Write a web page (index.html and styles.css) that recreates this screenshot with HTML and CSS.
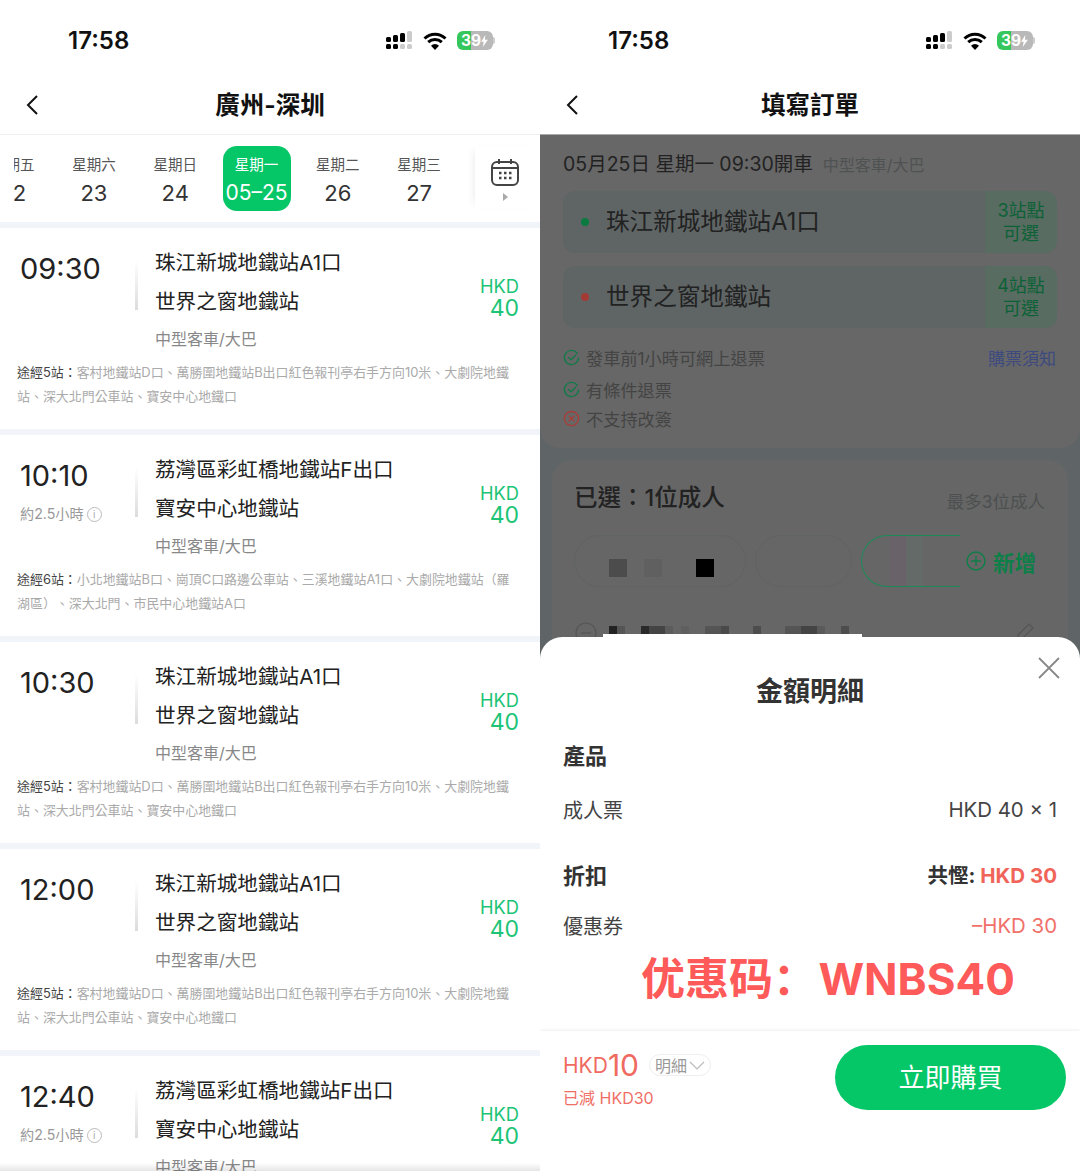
FILE: index.html
```html
<!DOCTYPE html>
<html lang="zh-Hant">
<head>
    <meta charset="UTF-8">
    <title>廣州-深圳</title>
    <link rel="stylesheet" href="styles.css">
</head>
<body>
    <div class="phone list-phone">
        <div class="status">
            <span class="clock">17:58</span>
            <svg class="signal" viewBox="0 0 27 19"><rect x="0" y="6" width="5" height="5" rx="1.5"/><rect x="0" y="13" width="5" height="5" rx="1.5"/><rect x="7" y="4" width="5" height="7" rx="1.5"/><rect x="7" y="13" width="5" height="5" rx="1.5"/><rect x="14" y="2" width="5" height="9" rx="1.5"/><rect x="14" y="13" width="5" height="5" rx="1.5" fill="#ccc"/><rect x="21" y="0" width="5" height="11" rx="1.5" fill="#ccc"/><rect x="21" y="13" width="5" height="5" rx="1.5" fill="#ccc"/></svg>
            <svg class="wifi" viewBox="0 0 24 18"><path d="M1.5 6.5a15 15 0 0 1 21 0M5.2 10.2a10 10 0 0 1 13.6 0" fill="none" stroke="#000" stroke-width="3"/><path d="M12 18l-4-4.2a5.6 5.6 0 0 1 8 0z"/></svg>
            <span class="battery">39<svg viewBox="0 0 8 14"><path d="M5 0L0 8h3l-1 6 6-8.500H4.500z" fill="#fff"/></svg></span>
        </div>
        <div class="nav">
            <svg class="back" viewBox="0 0 12 20"><path d="M11 1L2 10l9 9" fill="none" stroke="#111" stroke-width="2"/></svg>
            <h1>廣州-深圳</h1>
        </div>
        <div class="dates">
            <div class="day-list">
                <div class="day-track">
                    <div class="day"><span class="day-name">星期五</span><span class="day-num">22</span></div>
                    <div class="day"><span class="day-name">星期六</span><span class="day-num">23</span></div>
                    <div class="day"><span class="day-name">星期日</span><span class="day-num">24</span></div>
                    <div class="day active"><span class="day-name">星期一</span><span class="day-num">05–25</span></div>
                    <div class="day"><span class="day-name">星期二</span><span class="day-num">26</span></div>
                    <div class="day"><span class="day-name">星期三</span><span class="day-num">27</span></div>
                </div>
            </div>
            <div class="calendar">
                <svg viewBox="0 0 28 28" width="28" height="28"><rect x="1" y="4" width="26" height="23" rx="5" fill="none" stroke="#444" stroke-width="2"/><path d="M1 10h26M8 1v5M20 1v5" stroke="#444" stroke-width="2" fill="none"/><path d="M8 15h2.500M13 15h2.500M18 15h2.500M8 20h2.500M13 20h2.500M18 20h2.500" stroke="#444" stroke-width="2.500"/></svg>
                <span class="cal-arrow"></span>
            </div>
        </div>

        <div class="trip">
            <div class="trip-main">
                <div class="trip-time"><div class="time">09:30</div></div>
                <div class="trip-line"></div>
                <div class="trip-stops">
                    <div class="stop">珠江新城地鐵站A1口</div>
                    <div class="stop">世界之窗地鐵站</div>
                    <div class="bus">中型客車/大巴</div>
                </div>
                <div class="price"><div class="cur">HKD</div><div class="amount">40</div></div>
            </div>
            <p class="via"><b>途經5站：</b>客村地鐵站D口、萬勝圍地鐵站B出口紅色報刊亭右手方向10米、大劇院地鐵<br>站、深大北門公車站、寶安中心地鐵口</p>
        </div>

        <div class="trip">
            <div class="trip-main">
                <div class="trip-time"><div class="time">10:10</div><div class="dur">約2.5小時<i class="info">i</i></div></div>
                <div class="trip-line"></div>
                <div class="trip-stops">
                    <div class="stop">荔灣區彩虹橋地鐵站F出口</div>
                    <div class="stop">寶安中心地鐵站</div>
                    <div class="bus">中型客車/大巴</div>
                </div>
                <div class="price"><div class="cur">HKD</div><div class="amount">40</div></div>
            </div>
            <p class="via"><b>途經6站：</b>小北地鐵站B口、崗頂C口路邊公車站、三溪地鐵站A1口、大劇院地鐵站（羅<br>湖區）、深大北門、市民中心地鐵站A口</p>
        </div>

        <div class="trip">
            <div class="trip-main">
                <div class="trip-time"><div class="time">10:30</div></div>
                <div class="trip-line"></div>
                <div class="trip-stops">
                    <div class="stop">珠江新城地鐵站A1口</div>
                    <div class="stop">世界之窗地鐵站</div>
                    <div class="bus">中型客車/大巴</div>
                </div>
                <div class="price"><div class="cur">HKD</div><div class="amount">40</div></div>
            </div>
            <p class="via"><b>途經5站：</b>客村地鐵站D口、萬勝圍地鐵站B出口紅色報刊亭右手方向10米、大劇院地鐵<br>站、深大北門公車站、寶安中心地鐵口</p>
        </div>

        <div class="trip">
            <div class="trip-main">
                <div class="trip-time"><div class="time">12:00</div></div>
                <div class="trip-line"></div>
                <div class="trip-stops">
                    <div class="stop">珠江新城地鐵站A1口</div>
                    <div class="stop">世界之窗地鐵站</div>
                    <div class="bus">中型客車/大巴</div>
                </div>
                <div class="price"><div class="cur">HKD</div><div class="amount">40</div></div>
            </div>
            <p class="via"><b>途經5站：</b>客村地鐵站D口、萬勝圍地鐵站B出口紅色報刊亭右手方向10米、大劇院地鐵<br>站、深大北門公車站、寶安中心地鐵口</p>
        </div>

        <div class="trip">
            <div class="trip-main">
                <div class="trip-time"><div class="time">12:40</div><div class="dur">約2.5小時<i class="info">i</i></div></div>
                <div class="trip-line"></div>
                <div class="trip-stops">
                    <div class="stop">荔灣區彩虹橋地鐵站F出口</div>
                    <div class="stop">寶安中心地鐵站</div>
                    <div class="bus">中型客車/大巴</div>
                </div>
                <div class="price"><div class="cur">HKD</div><div class="amount">40</div></div>
            </div>
        </div>
    </div>

    <div class="phone order-phone">
        <div class="status">
            <span class="clock">17:58</span>
            <svg class="signal" viewBox="0 0 27 19"><rect x="0" y="6" width="5" height="5" rx="1.5"/><rect x="0" y="13" width="5" height="5" rx="1.5"/><rect x="7" y="4" width="5" height="7" rx="1.5"/><rect x="7" y="13" width="5" height="5" rx="1.5"/><rect x="14" y="2" width="5" height="9" rx="1.5"/><rect x="14" y="13" width="5" height="5" rx="1.5" fill="#ccc"/><rect x="21" y="0" width="5" height="11" rx="1.5" fill="#ccc"/><rect x="21" y="13" width="5" height="5" rx="1.5" fill="#ccc"/></svg>
            <svg class="wifi" viewBox="0 0 24 18"><path d="M1.5 6.5a15 15 0 0 1 21 0M5.2 10.2a10 10 0 0 1 13.6 0" fill="none" stroke="#000" stroke-width="3"/><path d="M12 18l-4-4.2a5.6 5.6 0 0 1 8 0z"/></svg>
            <span class="battery">39<svg viewBox="0 0 8 14"><path d="M5 0L0 8h3l-1 6 6-8.500H4.500z" fill="#fff"/></svg></span>
        </div>
        <div class="nav nav-order">
            <svg class="back" viewBox="0 0 12 20"><path d="M11 1L2 10l9 9" fill="none" stroke="#111" stroke-width="2"/></svg>
            <h1>填寫訂單</h1>
        </div>

        <div class="dimmed">
            <div class="ride-card">
                <div class="ride-head">05月25日 星期一 09:30開車<span>中型客車/大巴</span></div>
                <div class="pick">
                    <span class="dot dot-green"></span>
                    <span class="pick-name">珠江新城地鐵站A1口</span>
                    <span class="pick-tag">3站點<br>可選</span>
                </div>
                <div class="pick">
                    <span class="dot dot-red"></span>
                    <span class="pick-name">世界之窗地鐵站</span>
                    <span class="pick-tag">4站點<br>可選</span>
                </div>
                <div class="rule">
                    <svg viewBox="0 0 18 18"><path d="M15.500 5.200A7.500 7.500 0 1 0 16.500 9" fill="none" stroke="#157a4a" stroke-width="1.500"/><path d="M5.500 8.500l3 3 5.500-5.500" fill="none" stroke="#157a4a" stroke-width="1.500"/></svg>
                    發車前1小時可網上退票<a>購票須知</a>
                </div>
                <div class="rule rule-mid">
                    <svg viewBox="0 0 18 18"><path d="M15.500 5.200A7.500 7.500 0 1 0 16.500 9" fill="none" stroke="#157a4a" stroke-width="1.500"/><path d="M5.500 8.500l3 3 5.500-5.500" fill="none" stroke="#157a4a" stroke-width="1.500"/></svg>
                    有條件退票
                </div>
                <div class="rule">
                    <svg viewBox="0 0 18 18"><circle cx="9" cy="9" r="7.500" fill="none" stroke="#a63f3a" stroke-width="1.500"/><path d="M6 6l6 6M12 6l-6 6" stroke="#a63f3a" stroke-width="1.500"/></svg>
                    不支持改簽
                </div>
            </div>
            <div class="people-card">
                <div class="people-head"><span class="picked">已選：1位成人</span><span class="limit">最多3位成人</span></div>
                <div class="chips">
                    <div class="chip chip-one"><i class="sq sq1"></i><i class="sq sq2"></i><i class="sq sq3"></i></div>
                    <div class="chip chip-two"></div>
                    <div class="chip chip-three"></div>
                    <div class="add">
                        <svg viewBox="0 0 20 20" width="20" height="20"><circle cx="10" cy="10" r="9" fill="none" stroke="#0e7f48" stroke-width="1.400"/><path d="M10 5v10M5 10h10" stroke="#0e7f48" stroke-width="1.400"/></svg>
                        新增
                    </div>
                </div>
                <div class="person">
                    <svg class="minus" viewBox="0 0 22 22"><circle cx="11" cy="11" r="10" fill="none" stroke="#555" stroke-width="1.200"/><path d="M6 11h10" stroke="#555" stroke-width="1.200"/></svg>
                    <div class="mosaic"></div>
                    <svg class="pencil" viewBox="0 0 20 20"><path d="M3 13L14 2l4 4L7 17l-5 1z" fill="none" stroke="#555" stroke-width="1.200"/></svg>
                </div>
            </div>
        </div>

        <div class="sheet">
            <svg class="close" viewBox="0 0 22 22"><path d="M1 1l20 20M21 1L1 21" stroke="#888" stroke-width="1.800"/></svg>
            <h2>金額明細</h2>
            <div class="sheet-row sec-product"><strong>產品</strong></div>
            <div class="sheet-row sec-adult"><span>成人票</span><span class="fare">HKD 40 × 1</span></div>
            <div class="sheet-row sec-discount"><strong>折扣</strong><strong class="saved">共慳: <em>HKD 30</em></strong></div>
            <div class="sheet-row sec-coupon"><span>優惠券</span><span class="minus-fare">–HKD 30</span></div>
            <div class="promo" lang="zh-Hans">优惠码： WNBS40</div>
            <div class="pay-bar">
                <div class="pay-left">
                    <div class="total">HKD<b>10</b><span class="detail">明細<svg viewBox="0 0 16 9" width="16" height="9"><path d="M1 1l7 7 7-7" fill="none" stroke="#bbb" stroke-width="1.200"/></svg></span></div>
                    <div class="reduced">已減 HKD30</div>
                </div>
                <button class="buy">立即購買</button>
            </div>
        </div>
    </div>
</body>
</html>
```

FILE: styles.css
```css
* {
    box-sizing: border-box;
}

body {
    margin: 0;
    display: flex;
    width: 1080px;
    height: 1171px;
    overflow: hidden;
    background-color: #fff;
    font-family: Inter, "Noto Sans CJK TC", sans-serif;
    color: #222;
}

.phone {
    position: relative;
    width: 540px;
    height: 1171px;
    overflow: hidden;
    background-color: #fff;
}

.list-phone::after {
    content: "";
    position: absolute;
    left: 0;
    right: 0;
    bottom: 0;
    height: 8px;
    background: linear-gradient(to bottom, rgba(0,0,0,0), rgba(0,0,0,0.1));
}

.order-phone {
    display: flex;
    flex-direction: column;
}

/* status bar */
.status {
    display: flex;
    align-items: center;
    height: 75px;
    padding: 6px 45px 0 68px;
    flex-shrink: 0;
}

.clock {
    font-size: 24px;
    font-weight: 600;
    color: #111;
    margin-right: auto;
}

.signal {
    width: 27px;
    height: 19px;
}

.wifi {
    width: 24px;
    height: 18px;
    margin: 0 10px 0 10px;
}

.battery {
    position: relative;
    display: flex;
    align-items: center;
    width: 36px;
    height: 19px;
    padding-left: 4px;
    border-radius: 6px;
    background: linear-gradient(to right, #35c65c 40%, #b9b9b9 40%);
    color: #fff;
    font-size: 15.500px;
    font-weight: 700;
    margin-right: 2px;
}

.battery::after {
    content: "";
    position: absolute;
    right: -2px;
    top: 6px;
    width: 2px;
    height: 7px;
    border-radius: 0 2px 2px 0;
    background-color: #ccc;
}

.battery svg {
    width: 7px;
    height: 12px;
}

/* nav */
.nav {
    display: flex;
    align-items: center;
    justify-content: center;
    position: relative;
    height: 60px;
    border-bottom: 1px solid #eee;
    flex-shrink: 0;
}

.nav-order {
    border-bottom-color: #aaa;
}

.nav h1 {
    margin: 0 0 3px;
    font-size: 24.500px;
    font-weight: 700;
    color: #111;
}

.back {
    position: absolute;
    left: 26px;
    top: 20px;
    width: 12px;
    height: 20px;
}

/* date strip */
.dates {
    display: flex;
    height: 87px;
    padding-top: 11px;
}

.day-list {
    flex: 1;
    margin-left: 14px;
    overflow: hidden;
}

.day-track {
    display: flex;
    margin-left: -42px;
}

.day {
    display: flex;
    flex-direction: column;
    align-items: center;
    flex: 0 0 81.300px;
    height: 65px;
    padding-top: 9px;
}

.day-name {
    font-size: 14.500px;
    line-height: 20px;
    color: #555;
}

.day-num {
    margin-top: 2px;
    font-size: 22px;
    line-height: 32px;
    color: #333;
}

.day.active {
    flex: 0 0 68px;
    margin: 0 6.650px;
    border-radius: 14px;
    background-color: #06c768;
}

.day.active .day-name,
.day.active .day-num {
    color: #fff;
    white-space: nowrap;
}

.day.active .day-num {
    font-size: 21px;
}

.calendar {
    display: flex;
    flex-direction: column;
    align-items: center;
    width: 65px;
    height: 62px;
    padding: 12px 5px 0 0;
    box-shadow: -6px 0 8px -5px rgba(0,0,0,0.08);
}

.cal-arrow {
    margin-top: 7px;
    border-left: 5px solid #aaa;
    border-top: 4px solid transparent;
    border-bottom: 4px solid transparent;
}

/* trips */
.trip {
    height: 207px;
    border-top: 6px solid #f1f4f9;
    padding: 15px 21px 0 20px;
}

.trip-main {
    display: flex;
}

.trip-time {
    width: 115px;
    padding-top: 6px;
}

.time {
    font-size: 29px;
    line-height: 40px;
    color: #222;
}

.dur {
    display: flex;
    align-items: center;
    margin-top: 8px;
    font-size: 14.200px;
    line-height: 20px;
    color: #999;
}

.info {
    width: 15px;
    height: 15px;
    margin-left: 3px;
    border: 1px solid #bbb;
    border-radius: 50%;
    font-size: 10px;
    line-height: 13px;
    font-style: normal;
    text-align: center;
    color: #aaa;
}

.trip-line {
    width: 3px;
    height: 50px;
    margin: 17px 18px 0 0;
    background: linear-gradient(to bottom, #fff, #dcdcdc);
}

.trip-stops {
    flex: 1;
    margin-left: -1px;
}

.stop {
    font-size: 20.600px;
    line-height: 39px;
    color: #222;
}

.bus {
    font-size: 16px;
    line-height: 37px;
    color: #888;
}

.price {
    padding-top: 33px;
    text-align: right;
    color: #1cc476;
}

.cur {
    font-size: 18.300px;
    line-height: 21px;
}

.amount {
    font-size: 23px;
    line-height: 22px;
}

.via {
    margin: 2px 0 0 -3px;
    font-size: 12.950px;
    line-height: 24px;
    color: #aaa;
    white-space: nowrap;
    text-spacing-trim: space-all;
}

.via b {
    font-weight: 400;
    color: #444;
}

/* dimmed order page */
.dimmed {
    flex: 1;
    min-height: 0;
    overflow: hidden;
    background-color: #5f6566;
}

.ride-card {
    height: 313px;
    padding: 15px 23px 0;
    border-radius: 0 0 20px 20px;
    background-color: #676767;
}

.ride-head {
    font-size: 19.500px;
    line-height: 28px;
    color: #222;
    white-space: nowrap;
}

.ride-head span {
    margin-left: 10px;
    font-size: 16px;
    color: #4f5252;
}

.pick {
    display: flex;
    align-items: center;
    height: 62px;
    margin-top: 12px;
    overflow: hidden;
    border-radius: 12px;
    background-color: #5f6565;
}

.pick + .pick {
    margin-top: 13px;
}

.dot {
    width: 8px;
    height: 8px;
    margin: 0 17px 0 18px;
    border-radius: 50%;
}

.dot-green {
    background-color: #0a7a40;
}

.dot-red {
    background-color: #a33a36;
}

.pick-name {
    flex: 1;
    padding-bottom: 4px;
    font-size: 23.600px;
    color: #222;
}

.pick-tag {
    display: flex;
    align-items: center;
    justify-content: center;
    align-self: stretch;
    width: 72px;
    background-color: #586c62;
    color: #0c6236;
    font-size: 18px;
    line-height: 23px;
    text-align: center;
}

.rule {
    display: flex;
    align-items: center;
    height: 30.500px;
    font-size: 17.200px;
    color: #444;
}

.pick + .rule {
    margin-top: 14px;
}

.rule-mid {
    padding-top: 3px;
}

.rule svg {
    width: 17px;
    height: 17px;
    margin-right: 6px;
}

.rule a {
    margin-left: auto;
    margin-right: 1px;
    font-size: 17px;
    color: #3d4a80;
}

.people-card {
    height: 300px;
    margin: 12px 12px 0;
    padding-top: 22px;
    border-radius: 20px 20px 0 0;
    background-color: #666;
}

.people-head {
    display: flex;
    align-items: center;
    justify-content: space-between;
    height: 32px;
    padding: 0 23px;
    line-height: 32px;
}

.picked {
    font-size: 23.500px;
    font-weight: 500;
    color: #222;
    margin-left: -1px;
}

.limit {
    margin-top: 7px;
    font-size: 17.500px;
    color: #4d5050;
}

.chips {
    display: flex;
    gap: 9px;
    height: 52px;
    margin-top: 21px;
    padding-left: 22px;
}

.chip {
    border: 1px solid #606363;
    border-radius: 26px;
}

.chip-one {
    display: flex;
    align-items: flex-end;
    width: 172px;
    padding: 0 0 9px 34px;
}

.sq {
    width: 18px;
    height: 18px;
}

.sq1 {
    background-color: #4c4c4c;
}

.sq2 {
    margin-left: 17px;
    background-color: #606060;
}

.sq3 {
    margin-left: 34px;
    background-color: #000;
}

.chip-two {
    width: 97px;
}

.chip-three {
    width: 99px;
    border: 1px solid #1c8a58;
    border-right: 0;
    border-radius: 26px 0 0 26px;
    background: linear-gradient(to right, #666 28%, #696268 28%, #696268 45%, #646a68 45%, #646a68 62%, #666 62%);
}

.add {
    display: flex;
    align-items: center;
    gap: 7px;
    margin-left: -3px;
    padding-bottom: 0;
    font-size: 21.500px;
    font-weight: 700;
    color: #0e7f48;
}

.person {
    display: flex;
    align-items: flex-start;
    margin-top: 35px;
    padding: 0 33px 0 23px;
}

.minus {
    width: 22px;
    height: 22px;
}

.mosaic {
    width: 259px;
    height: 11px;
    margin: 4px 0 0 6px;
    border-bottom: 3px solid #fff;
    background-color: #666;
    background-image: linear-gradient(to right,
        #222 0 8px, #555 8px 16px, #666 16px 32px, #2a2a2a 32px 40px, #444 40px 56px, #5c5c5c 56px 64px,
        #666 64px 72px, #5f5f5f 72px 80px, #666 80px 96px, #555 96px 112px, #4a4a4a 112px 120px,
        #666 120px 144px, #4d4d4d 144px 152px, #666 152px 176px, #555 176px 192px, #444 192px 208px,
        #5a5a5a 208px 216px, #666 216px 232px, #4d4d4d 232px 240px, #666 240px);
    background-position: 6px 0;
    background-repeat: no-repeat;
}

.pencil {
    width: 20px;
    height: 20px;
    margin-left: auto;
}

/* bottom sheet */
.sheet {
    position: relative;
    display: flex;
    flex-direction: column;
    flex-shrink: 0;
    height: 534px;
    margin-top: -22px;
    padding-top: 39px;
    border-radius: 22px 22px 0 0;
    background-color: #fff;
}

.close {
    position: absolute;
    top: 20px;
    right: 20px;
    width: 22px;
    height: 22px;
}

.sheet h2 {
    margin: 0;
    font-size: 27px;
    font-weight: 700;
    line-height: 32px;
    text-align: center;
    color: #333;
}

.sheet-row {
    display: flex;
    align-items: center;
    justify-content: space-between;
    height: 30px;
    padding: 0 23px;
    font-size: 20px;
    color: #444;
}

.sheet-row strong {
    font-size: 22px;
    font-weight: 700;
    color: #333;
}

.sec-product {
    margin-top: 31px;
}

.sec-adult {
    margin-top: 25px;
}

.sec-discount {
    margin-top: 35px;
}

.sec-coupon {
    margin-top: 21px;
}

.sheet-row .saved {
    font-size: 20.500px;
}

.saved em {
    font-style: normal;
    color: #f0645a;
}

.fare {
    font-size: 20.400px;
}

.minus-fare {
    font-size: 20.400px;
    color: #f0706a;
}

.promo {
    margin-top: 14px;
    padding-left: 101px;
    font-family: Inter, "Noto Sans CJK SC", sans-serif;
    font-size: 44px;
    font-weight: 700;
    line-height: 50px;
    word-spacing: -9px;
    color: #ff5a5a;
    white-space: nowrap;
}

.pay-bar {
    display: flex;
    justify-content: space-between;
    align-items: flex-start;
    flex: 1;
    margin-top: 27px;
    padding: 14px 14px 0 23px;
    box-shadow: 0 -1px 3px rgba(0,0,0,0.07);
}

.total {
    display: flex;
    align-items: center;
    height: 40px;
    font-size: 21px;
    color: #ef6a60;
}

.total b {
    font-size: 30px;
    font-weight: 400;
}

.detail {
    display: flex;
    align-items: center;
    gap: 2px;
    height: 22px;
    margin-left: 10px;
    padding: 0 5px;
    border: 1px solid #eee;
    border-radius: 11px;
    font-size: 16px;
    color: #999;
}

.reduced {
    margin-top: 2px;
    font-size: 16px;
    line-height: 22px;
    color: #ef6f66;
}

.buy {
    width: 231px;
    height: 65px;
    padding-bottom: 5px;
    border: none;
    border-radius: 33px;
    background-color: #06c768;
    color: #fff;
    font-family: inherit;
    font-size: 26px;
}
```
